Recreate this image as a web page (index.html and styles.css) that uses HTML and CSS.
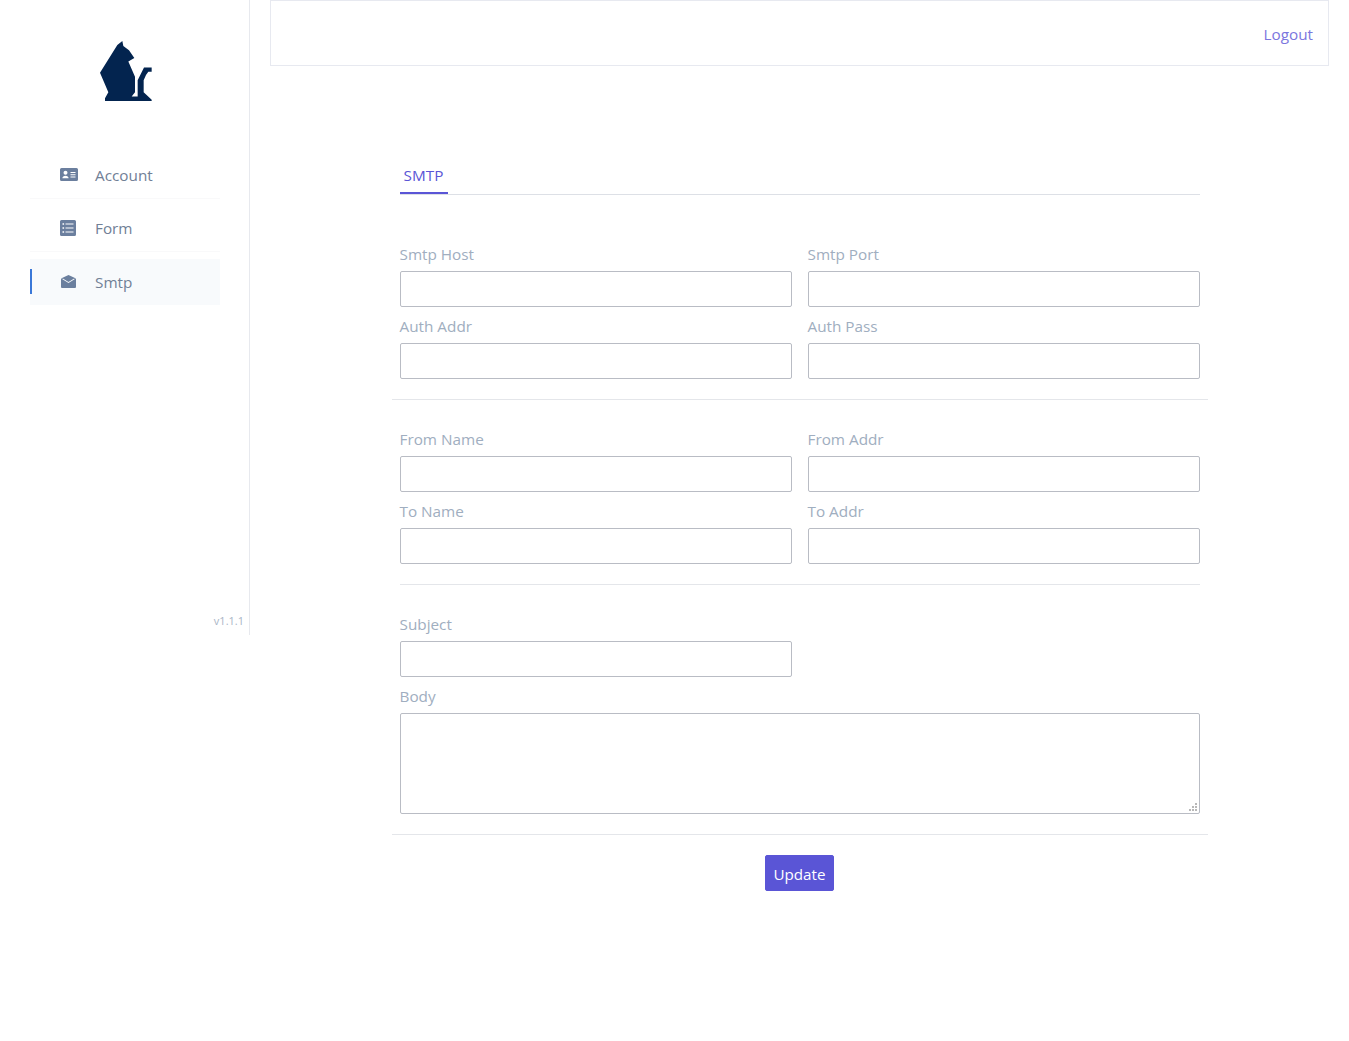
FILE: index.html
```html
<!DOCTYPE html>
<html lang="en">
<head>
<meta charset="utf-8">
<title>SMTP</title>
<link rel="stylesheet" href="styles.css">
</head>
<body>
<div class="app">
  <aside class="sidebar">
    <div class="logo">
      <svg class="logo-mark" viewBox="60 35 156 176" preserveAspectRatio="none" aria-hidden="true">
        <path class="cat" d="M60 128 112 47 127 35 130 50 147 62 163 85 145 95 165 140V185L155 198H173V150L192 113H215V125H205L198 135 191 150V185L215 207V211H75V203L85 185Z"/>
      </svg>
    </div>
    <nav class="menu">
      <a class="menu-item">
        <svg class="menu-icon icon-card" viewBox="0 0 18 13"><path fill-rule="evenodd" d="M1.5 0h15A1.5 1.5 0 0 1 18 1.5v10a1.5 1.5 0 0 1-1.5 1.5h-15A1.5 1.5 0 0 1 0 11.500v-10A1.500 1.500 0 0 1 1.500 0zM5.500 2.800a2 2 0 1 0 0 4 2 2 0 0 0 0-4zM2.400 10.200c0-1.400 1.300-2.500 3.100-2.500s3.100 1.100 3.100 2.500zM10.500 4h5v1h-5zM10.500 6.200h5v1h-5zM10.500 8.400h5v1h-5z"/></svg>
        <span>Account</span>
      </a>
      <a class="menu-item">
        <svg class="menu-icon" viewBox="0 0 16 16"><path fill-rule="evenodd" d="M1.500 0h13A1.500 1.500 0 0 1 16 1.500v13a1.500 1.500 0 0 1-1.500 1.500h-13A1.500 1.500 0 0 1 0 14.500v-13A1.500 1.500 0 0 1 1.500 0zM2.500 3.200h1.600v1.600H2.500zM5.500 3.400h8v1.200h-8zM2.500 7.200h1.600v1.600H2.500zM5.500 7.400h8v1.200h-8zM2.500 11.200h1.600v1.600H2.500zM5.500 11.400h8v1.200h-8z"/></svg>
        <span>Form</span>
      </a>
      <a class="menu-item is-active">
        <svg class="menu-icon icon-mail" viewBox="0 0 15 13"><path fill-rule="evenodd" d="M7.500 0 14 3 15 4V12a1 1 0 0 1-1 1H1a1 1 0 0 1-1-1V4L1 3ZM1.800 3.600 1.400 4.200 7.500 8 13.600 4.200 13.200 3.600 7.500 7Z"/></svg>
        <span>Smtp</span>
      </a>
    </nav>
    <div class="version">v1.1.1</div>
  </aside>
  <main class="main">
    <header class="topbar"><a class="logout">Logout</a></header>
    <section class="content">
      <div class="tabs"><span class="tab">SMTP</span></div>
      <form class="form">
        <div class="grid">
          <div class="field"><label>Smtp Host</label><input type="text"></div>
          <div class="field"><label>Smtp Port</label><input type="text"></div>
          <div class="field"><label>Auth Addr</label><input type="text"></div>
          <div class="field"><label>Auth Pass</label><input type="text"></div>
        </div>
        <hr class="rule">
        <div class="grid">
          <div class="field"><label>From Name</label><input type="text"></div>
          <div class="field"><label>From Addr</label><input type="text"></div>
          <div class="field"><label>To Name</label><input type="text"></div>
          <div class="field"><label>To Addr</label><input type="text"></div>
        </div>
        <hr class="rule rule-inset">
        <div class="grid">
          <div class="field"><label>Subject</label><input type="text"></div>
          <div class="field field-full">
            <label>Body</label>
            <div class="textarea-wrap">
              <textarea></textarea>
              <svg class="grip" viewBox="0 0 9 9" aria-hidden="true"><path d="M6 0h2v2H6zM3 3h2v2H3zM6 3h2v2H6zM0 6h2v2H0zM3 6h2v2H3zM6 6h2v2H6z"/></svg>
            </div>
          </div>
        </div>
        <hr class="rule">
        <div class="actions"><button type="button" class="btn">Update</button></div>
      </form>
    </section>
  </main>
</div>
</body>
</html>
```
FILE: styles.css
```css
* { box-sizing: border-box; }
html, body { margin: 0; padding: 0; background: #fff; }
body {
  font-family: "Open Sans", "Noto Sans", sans-serif;
  font-size: 15.3px;
  color: #718096;
}
.app { display: flex; align-items: flex-start; min-height: 1041px; }
.sidebar {
  width: 250px;
  height: 635px;
  flex: none;
  display: flex;
  flex-direction: column;
  border-right: 1px solid #e7e9ee;
}
.logo { display: flex; justify-content: center; padding: 41px 0 0 2px; height: 152px; }
.logo-mark { width: 52px; height: 60px; }
.cat { fill: #03244f; }
.menu { margin: 0 29px 0 30px; display: flex; flex-direction: column; }
.menu-item {
  position: relative;
  display: flex;
  align-items: center;
  height: 46px;
  padding-left: 30px;
  margin-bottom: 7px;
  color: #718096;
  box-shadow: 0 1px 0 #f9f9fa;
}
.menu-item.is-active { margin-top: 1px; background: #f8fafc; box-shadow: none; }
.menu-item.is-active::before {
  content: "";
  position: absolute;
  left: 0;
  top: 10px;
  width: 2px;
  height: 25px;
  background: #3b78d8;
}
.menu-icon { width: 16px; height: 16px; margin: -1px 19px 0 0; fill: #6b7f9e; flex: none; }
.icon-card { width: 18px; height: 13px; margin-right: 17px; }
.icon-mail { width: 15px; height: 13px; margin-left: 1px; margin-right: 19px; }
.version {
  margin-top: auto;
  margin-bottom: 5px;
  padding-right: 5px;
  text-align: right;
  font-size: 11px;
  line-height: 18px;
  color: #a9b5c6;
}
.main { flex: 1; min-width: 0; padding: 0 20px; }
.topbar {
  height: 66px;
  display: flex;
  align-items: center;
  justify-content: flex-end;
  padding: 2px 15px 0 0;
  border: 1px solid #e7e9f0;
}
.logout { color: #7b76de; }
.content { width: 816px; margin: 0 auto; padding-top: 88px; }
.tabs { margin: 0 8px; border-bottom: 1px solid #dde0e6; height: 41px; display: flex; }
.tab {
  width: 48px;
  height: 40px;
  text-align: center;
  line-height: 42px;
  color: #5a55d6;
  border-bottom: 2px solid #5a55d6;
}
.form { padding-top: 40px; }
.grid { display: grid; grid-template-columns: 1fr 1fr; }
.field { padding: 0 8px; display: flex; flex-direction: column; }
.field-full { grid-column: 1 / -1; }
.field label { height: 36px; line-height: 38px; color: #a0aec0; }
.field input, .field textarea {
  display: block;
  width: 100%;
  height: 36px;
  margin: 0;
  padding: 6px 12px;
  background: #fff;
  border: 1px solid #b9bcc4;
  border-radius: 2px;
  outline: none;
  font: inherit;
}
.textarea-wrap { position: relative; }
.field textarea { height: 101px; resize: none; }
.grip {
  position: absolute;
  right: 2px;
  bottom: 2px;
  width: 9px;
  height: 9px;
  fill: #b8b8b8;
}
.rule { height: 1px; margin: 20px 0; padding: 0; border: 0; background: #e4e6ea; }
.rule-inset { margin: 20px 8px; }
.actions { display: flex; justify-content: center; }
.btn {
  width: 69px;
  height: 36px;
  padding: 2px 0 0;
  border: 1px solid #5a55d6;
  border-radius: 2px;
  background: #5a55d6;
  color: #fff;
  font: inherit;
  font-size: 15.2px;
}
```
